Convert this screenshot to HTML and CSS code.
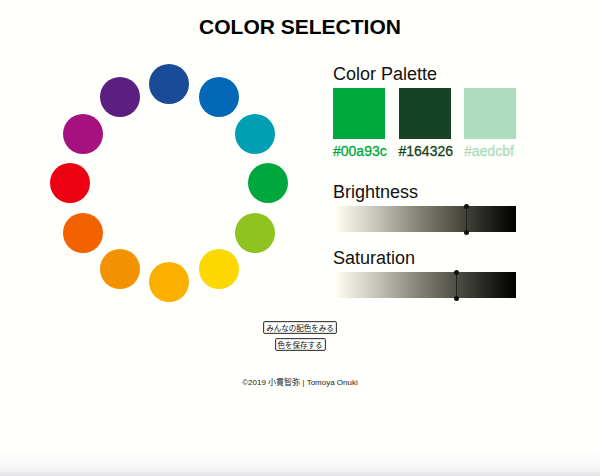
FILE: index.html
```html
<!DOCTYPE html>
<html lang="ja">
<head>
<meta charset="utf-8">
<title>Color Selection</title>
<link rel="stylesheet" href="styles.css">
</head>
<body>
<div class="page">
  <h1 class="title">COLOR SELECTION</h1>
  <div class="main">
    <div class="wheel">
      <span class="dot" style="left:99px;top:0px;background:#1a4b98"></span>
      <span class="dot" style="left:148.5px;top:13.3px;background:#0068b7"></span>
      <span class="dot" style="left:184.7px;top:49.5px;background:#00a0b2"></span>
      <span class="dot" style="left:198px;top:99px;background:#00a73c"></span>
      <span class="dot" style="left:184.7px;top:148.5px;background:#8fc31f"></span>
      <span class="dot" style="left:148.5px;top:184.7px;background:#fdd800"></span>
      <span class="dot" style="left:99px;top:198px;background:#fbb000"></span>
      <span class="dot" style="left:49.5px;top:184.7px;background:#f39200"></span>
      <span class="dot" style="left:13.3px;top:148.5px;background:#f26200"></span>
      <span class="dot" style="left:0px;top:99px;background:#ed0012"></span>
      <span class="dot" style="left:13.3px;top:49.5px;background:#a5127f"></span>
      <span class="dot" style="left:49.5px;top:13.3px;background:#5b1f82"></span>
    </div>
    <div class="panel">
      <h2 class="heading">Color Palette</h2>
      <div class="swatches">
        <div class="swatch">
          <div class="chip" style="background:#00a93c"></div>
          <div class="code" style="color:#00a93c">#00a93c</div>
        </div>
        <div class="swatch">
          <div class="chip" style="background:#164326"></div>
          <div class="code" style="color:#164326">#164326</div>
        </div>
        <div class="swatch">
          <div class="chip" style="background:#aedcbf"></div>
          <div class="code" style="color:#aedcbf">#aedcbf</div>
        </div>
      </div>
      <h2 class="heading heading-b">Brightness</h2>
      <div class="bar">
        <span class="thumb" style="left:130px"></span>
      </div>
      <h2 class="heading heading-s">Saturation</h2>
      <div class="bar">
        <span class="thumb" style="left:120px"></span>
      </div>
    </div>
  </div>
  <div class="actions">
    <button class="btn" type="button">みんなの配色をみる</button>
    <button class="btn" type="button">色を保存する</button>
  </div>
  <p class="footer">©2019 小貫智弥 | Tomoya Onuki</p>
</div>
</body>
</html>
```

FILE: styles.css
```css
html, body {
  margin: 0;
  padding: 0;
}
body {
  width: 600px;
  height: 476px;
  overflow: hidden;
  background: linear-gradient(to bottom, #fffffb 0, #fffffb 450px, #f4f4f6 470px, #e2e2e6 476px);
  font-family: "Liberation Sans", Arial, sans-serif;
  color: #111;
}
.page {
  display: flex;
  flex-direction: column;
  align-items: center;
}
.title {
  margin: 16px 0 0;
  font-size: 21px;
  line-height: 22px;
  font-weight: bold;
  color: #000;
}
.main {
  display: flex;
  align-self: stretch;
  padding-left: 50px;
  margin-top: 26px;
}
.wheel {
  position: relative;
  width: 238px;
  height: 238px;
  flex: none;
}
.dot {
  position: absolute;
  width: 40px;
  height: 40px;
  border-radius: 50%;
}
.panel {
  margin-left: 45px;
  display: flex;
  flex-direction: column;
}
.heading {
  margin: 0;
  font-size: 18px;
  line-height: 20px;
  font-weight: normal;
  color: #111;
}
.swatches {
  display: flex;
  gap: 13.5px;
  margin-top: 4px;
}
.swatch {
  width: 52px;
}
.chip {
  height: 51px;
}
.code {
  margin-top: 4px;
  font-size: 14px;
  line-height: 16px;
  -webkit-text-stroke: 0.3px currentColor;
}
.heading-b {
  margin-top: 23px;
}
.heading-s {
  margin-top: 16px;
}
.bar {
  position: relative;
  margin-top: 4px;
  margin-left: 3px;
  width: 180px;
  height: 26px;
  background: linear-gradient(to right, #fdfdf2 0%, #c6c6bd 22%, #86857a 45%, #47473d 70%, #1a1a17 88%, #000 100%);
}
.thumb {
  position: absolute;
  top: 0;
  bottom: -1px;
  width: 1px;
  background: #222;
}
.thumb::before,
.thumb::after {
  content: "";
  position: absolute;
  left: -2px;
  width: 5px;
  height: 5px;
  border-radius: 50%;
  background: #111;
}
.thumb::before { top: -2px; }
.thumb::after { bottom: -2px; }
.actions {
  display: flex;
  flex-direction: column;
  align-items: center;
  gap: 4px;
  margin-top: 19px;
}
.btn {
  font-family: "Noto Sans CJK JP", sans-serif;
  font-size: 7.5px;
  line-height: 11px;
  padding: 0 2px;
  border: 1px solid #444;
  border-radius: 2px;
  background: #fff;
  color: #111;
  box-shadow: inset 0 0 0 1px #ddd;
}
.footer {
  margin: 26px 0 0;
  font-family: "Liberation Sans", "Noto Sans CJK JP", sans-serif;
  font-size: 8px;
  line-height: 12px;
  color: #222;
}
```
